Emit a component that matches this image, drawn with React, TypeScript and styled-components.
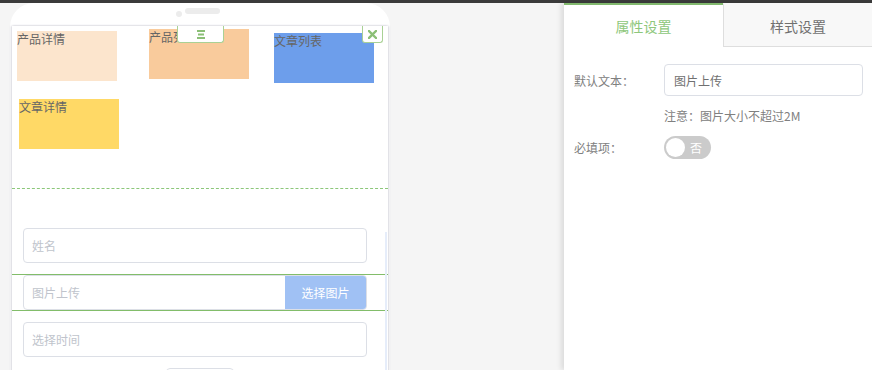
import styled, { createGlobalStyle } from "styled-components";

const GlobalStyle = createGlobalStyle`
  html, body {
    margin: 0;
    padding: 0;
    background: #f5f5f5;
    font-family: "Noto Sans CJK SC", "Noto Sans", sans-serif;
  }
  * {
    box-sizing: border-box;
  }
`;

const Page = styled.div`
  height: 370px;
  overflow: hidden;
  display: flex;
  flex-direction: column;
`;

const TopBar = styled.div`
  height: 3px;
  background: #3b3b3b;
  flex-shrink: 0;
`;

const Main = styled.div`
  flex: 1;
  display: flex;
  align-items: flex-start;
`;

const Phone = styled.div`
  width: 380px;
  margin-left: 10px;
  background: #fff;
  border-radius: 24px 24px 0 0;
`;

const PhoneHead = styled.div`
  height: 23px;
  display: flex;
  justify-content: center;
  align-items: flex-start;
  padding-top: 5px;
  padding-right: 5px;
  gap: 3px;
`;

const Camera = styled.span`
  width: 6px;
  height: 6px;
  margin-top: 3px;
  border-radius: 50%;
  background: #ececec;
`;

const Speaker = styled.span`
  width: 35px;
  height: 6px;
  border-radius: 3px;
  background: #ececec;
`;

const Screen = styled.div`
  position: relative;
  margin: 0 2px;
  height: 400px;
  background: #fff;
  box-shadow: -1px 0 2px rgba(60, 60, 90, 0.2), 1px 0 2px rgba(60, 60, 90, 0.2);
`;

const Canvas = styled.div`
  position: relative;
  height: 163px;
  border-bottom: 1px dashed #8cc77a;
`;

const BlockRow = styled.div`
  display: flex;
  align-items: flex-start;
`;

const Block = styled.div<{ $bg: string; $left: number; $top: number }>`
  width: 100px;
  height: 50px;
  margin-left: ${(p) => p.$left}px;
  margin-top: ${(p) => p.$top}px;
  background: ${(p) => p.$bg};
  color: #666;
  font-size: 12px;
  line-height: 16px;
`;

const HandleTab = styled.div`
  position: absolute;
  left: 165px;
  top: 0;
  width: 47px;
  height: 17px;
  background: #fff;
  border: 1px solid #a9d195;
  border-top: none;
  border-radius: 0 0 3px 3px;
  display: flex;
  justify-content: center;
  align-items: center;
`;

const CloseTab = styled.div`
  position: absolute;
  left: 350px;
  top: 0;
  width: 21px;
  height: 17px;
  background: #fff;
  border: 1px solid #a9d195;
  border-top: none;
  border-radius: 0 0 3px 3px;
  display: flex;
  justify-content: center;
  align-items: center;
`;

const Form = styled.div`
  padding-top: 38px;
`;

const FormItem = styled.div<{ $active?: boolean }>`
  padding: 0 21px 0 11px;
  margin-bottom: 10px;
  border-top: 1px solid ${(p) => (p.$active ? "#82bd6a" : "transparent")};
  border-bottom: 1px solid ${(p) => (p.$active ? "#82bd6a" : "transparent")};
`;

const InputBox = styled.div`
  height: 35px;
  display: flex;
  border: 1px solid #dcdfe6;
  border-radius: 4px;
  overflow: hidden;
`;

const Placeholder = styled.span`
  flex: 1;
  display: flex;
  align-items: center;
  padding-left: 8px;
  font-size: 12px;
  color: #c0c4cc;
`;

const PickButton = styled.span`
  width: 81px;
  display: flex;
  align-items: center;
  justify-content: center;
  background: #a0c1f4;
  color: #fff;
  font-size: 12px;
`;

const SubmitButton = styled.div`
  width: 68px;
  height: 30px;
  margin: 1px auto 0;
  border: 1px solid #dcdfe6;
  border-radius: 4px;
`;

const ScrollTrack = styled.div`
  position: absolute;
  right: 1px;
  top: 206px;
  width: 2px;
  height: 200px;
  background: #e6edfa;
`;

const Spacer = styled.div`
  flex: 1;
`;

const Panel = styled.div`
  width: 308px;
  height: 367px;
  background: #fff;
  box-shadow: -3px 0 5px rgba(0, 0, 0, 0.1);
`;

const Tabs = styled.div`
  display: flex;
  height: 44px;
`;

const Tab = styled.div<{ $active?: boolean }>`
  width: ${(p) => (p.$active ? 159 : 149)}px;
  display: flex;
  align-items: center;
  justify-content: center;
  font-size: 14px;
  color: ${(p) => (p.$active ? "#8ec77b" : "#707070")};
  background: ${(p) => (p.$active ? "#fff" : "#f8f8f8")};
  border-top: 2px solid ${(p) => (p.$active ? "#82b96e" : "#f8f8f8")};
  border-left: ${(p) => (p.$active ? "none" : "1px solid #dedede")};
  border-bottom: ${(p) => (p.$active ? "none" : "1px solid #dedede")};
`;

const PanelBody = styled.div`
  padding: 17px 9px 0 10px;
`;

const FieldRow = styled.div`
  display: flex;
  align-items: center;
`;

const Label = styled.span`
  width: 90px;
  font-size: 12px;
  color: #808080;
`;

const TextInput = styled.div`
  flex: 1;
  height: 32px;
  display: flex;
  align-items: center;
  padding-left: 9px;
  border: 1px solid #dcdfe6;
  border-radius: 4px;
  font-size: 12px;
  color: #707070;
`;

const Hint = styled.div`
  margin: 10px 0 0 90px;
  font-size: 12px;
  line-height: 20px;
  color: #808080;
`;

const SwitchRow = styled(FieldRow)`
  margin-top: 10px;
`;

const Switch = styled.div`
  width: 47px;
  height: 23px;
  border-radius: 12px;
  background: #cbcbcb;
  display: flex;
  align-items: center;
  padding-left: 2px;
`;

const Knob = styled.span`
  width: 19px;
  height: 19px;
  border-radius: 50%;
  background: #fff;
`;

const SwitchText = styled.span`
  margin-left: 5px;
  font-size: 12px;
  color: #fff;
`;

function HandleIcon() {
  return (
    <svg width="8" height="9" viewBox="0 0 8 9">
      <rect x="0" y="0" width="8" height="2" fill="#8bbf76" />
      <rect x="1" y="3.5" width="6" height="2" fill="#8bbf76" />
      <rect x="0" y="7" width="8" height="2" fill="#8bbf76" />
    </svg>
  );
}

function CloseIcon() {
  return (
    <svg width="9" height="9" viewBox="0 0 9 9">
      <path d="M1 1 L8 8 M8 1 L1 8" stroke="#8bbf76" strokeWidth="2.4" strokeLinecap="square" />
    </svg>
  );
}

export default function App() {
  return (
    <Page>
      <GlobalStyle />
      <TopBar />
      <Main>
        <Phone>
          <PhoneHead>
            <Camera />
            <Speaker />
          </PhoneHead>
          <Screen>
            <Canvas>
              <BlockRow>
                <Block $bg="#fce5cd" $left={5} $top={5}>产品详情</Block>
                <Block $bg="#f9cb9c" $left={32} $top={3}>产品列表</Block>
                <Block $bg="#6d9eeb" $left={25} $top={7}>文章列表</Block>
              </BlockRow>
              <BlockRow>
                <Block $bg="#ffd966" $left={7} $top={16}>文章详情</Block>
              </BlockRow>
              <HandleTab>
                <HandleIcon />
              </HandleTab>
              <CloseTab>
                <CloseIcon />
              </CloseTab>
            </Canvas>
            <Form>
              <FormItem>
                <InputBox>
                  <Placeholder>姓名</Placeholder>
                </InputBox>
              </FormItem>
              <FormItem $active>
                <InputBox>
                  <Placeholder>图片上传</Placeholder>
                  <PickButton>选择图片</PickButton>
                </InputBox>
              </FormItem>
              <FormItem>
                <InputBox>
                  <Placeholder>选择时间</Placeholder>
                </InputBox>
              </FormItem>
              <SubmitButton />
            </Form>
            <ScrollTrack />
          </Screen>
        </Phone>
        <Spacer />
        <Panel>
          <Tabs>
            <Tab $active>属性设置</Tab>
            <Tab>样式设置</Tab>
          </Tabs>
          <PanelBody>
            <FieldRow>
              <Label>默认文本：</Label>
              <TextInput>图片上传</TextInput>
            </FieldRow>
            <Hint>注意：图片大小不超过2M</Hint>
            <SwitchRow>
              <Label>必填项：</Label>
              <Switch>
                <Knob />
                <SwitchText>否</SwitchText>
              </Switch>
            </SwitchRow>
          </PanelBody>
        </Panel>
      </Main>
    </Page>
  );
}
